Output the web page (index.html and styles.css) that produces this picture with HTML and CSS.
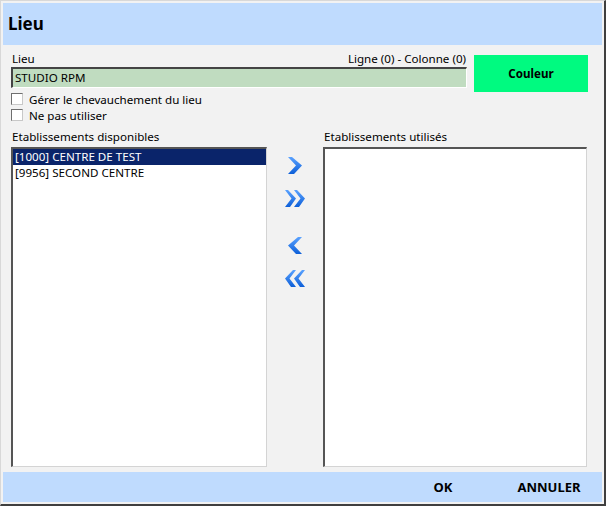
FILE: index.html
```html
<!DOCTYPE html>
<html>
<head>
    <title>Lieu</title>
    <link rel="stylesheet" href="styles.css">
</head>
<body>
<div class="window">
    <div class="header">Lieu</div>

    <div class="content">
        <div class="top">
            <div class="top-left">
                <div class="label-row">
                    <span>Lieu</span>
                    <span>Ligne (0) - Colonne (0)</span>
                </div>
                <div class="field">STUDIO RPM</div>
                <label class="check"><span class="box"></span>Gérer le chevauchement du lieu</label>
                <label class="check"><span class="box"></span>Ne pas utiliser</label>
            </div>
            <div class="color-btn">Couleur</div>
        </div>

        <div class="lists">
            <div class="list-label">Etablissements disponibles</div>
            <div></div>
            <div class="list-label">Etablissements utilisés</div>

            <div class="listbox">
                <div class="item selected">[1000] CENTRE DE TEST</div>
                <div class="item">[9956] SECOND CENTRE</div>
            </div>

            <div class="arrows">
                <svg class="arrow a1" width="16" height="19" viewBox="0 0 16 19">
                    <defs><linearGradient id="g" x1="0" y1="0" x2="0" y2="1"><stop offset="0" stop-color="#5aa2ff"/><stop offset="1" stop-color="#0d5fd8"/></linearGradient></defs>
                    <path d="M1 1 H5 L15 9.5 L7 18 H1 L9 9.5 Z" fill="url(#g)"/>
                </svg>
                <svg class="arrow a2" width="22" height="19" viewBox="0 0 22 19">
                    <path d="M1 1 H4 L12 9.5 L6 18 H1 L7.5 9.5 Z" fill="url(#g)"/>
                    <path d="M10 1 H13 L21 9.5 L15 18 H10 L16.5 9.5 Z" fill="url(#g)"/>
                </svg>
                <svg class="arrow a3" width="16" height="19" viewBox="0 0 16 19">
                    <path d="M15 1 H11 L1 9.5 L9 18 H15 L7 9.5 Z" fill="url(#g)"/>
                </svg>
                <svg class="arrow a4" width="22" height="19" viewBox="0 0 22 19">
                    <path d="M21 1 H18 L10 9.5 L16 18 H21 L14.5 9.5 Z" fill="url(#g)"/>
                    <path d="M12 1 H9 L1 9.5 L7 18 H12 L5.5 9.5 Z" fill="url(#g)"/>
                </svg>
            </div>

            <div class="listbox"></div>
        </div>
    </div>

    <div class="footer">
        <span class="fbtn">OK</span>
        <span class="fbtn">ANNULER</span>
    </div>
</div>
</body>
</html>
```

FILE: styles.css
```css
body {
    margin: 0;
    font-family: "Noto Sans", "DejaVu Sans", sans-serif;
    font-size: 11.6px;
    color: #000;
}
.window {
    width: 606px;
    height: 506px;
    box-sizing: border-box;
    background-color: #f2f2f2;
    border-top: 1px solid #d8d8d8;
    border-left: 1px solid #d8d8d8;
    border-right: 2px solid #3f3f3f;
    border-bottom: 2px solid #3f3f3f;
    padding: 2px;
    display: flex;
    flex-direction: column;
}
.header {
    height: 42px;
    background-color: #bfdbfe;
    font-size: 17px;
    font-weight: bold;
    line-height: 42px;
    padding-left: 5px;
}
.content {
    flex: 1;
    padding: 5px 0 0 8px;
}
.top {
    display: flex;
}
.top-left {
    width: 456px;
}
.label-row {
    display: flex;
    justify-content: space-between;
    height: 17px;
    line-height: 17px;
    padding: 0 1px;
}
.field {
    height: 21px;
    box-sizing: border-box;
    background-color: #c0dcc0;
    border-top: 2px solid #444;
    border-left: 2px solid #444;
    border-right: 1px solid #fff;
    border-bottom: 1px solid #fff;
    padding-left: 2px;
    line-height: 18px;
}
.check {
    display: flex;
    align-items: center;
    height: 16px;
}
.check:first-of-type {
    margin-top: 3px;
}
.box {
    width: 12px;
    height: 12px;
    box-sizing: border-box;
    background-color: #fff;
    border: 1px solid #6e6e6e;
    border-right-color: #c8c8c8;
    border-bottom-color: #c8c8c8;
    margin-right: 6px;
}
.color-btn {
    margin: 5px 0 0 7px;
    width: 114px;
    height: 37px;
    background-color: #00fa80;
    display: flex;
    align-items: center;
    justify-content: center;
    font-weight: bold;
}
.lists {
    margin-top: 4px;
    display: grid;
    grid-template-columns: 256px 56px 264px;
    grid-template-rows: 18px 320px;
    row-gap: 2px;
}
.list-label {
    padding: 2px 0 0 1px;
    line-height: 16px;
}
.listbox {
    background-color: #fff;
    border: 2px solid;
    border-color: #555 #d4d4d4 #d4d4d4 #555;
    border-right-width: 1px;
    border-bottom-width: 1px;
}
.item {
    height: 16px;
    line-height: 16px;
    padding-left: 2px;
}
.item.selected {
    background-color: #0a246a;
    color: #fff;
}
.arrows {
    display: flex;
    flex-direction: column;
    align-items: center;
    padding-top: 9px;
}
.a2 { margin-top: 14px; }
.a3 { margin-top: 28px; }
.a4 { margin-top: 14px; }
.footer {
    height: 30px;
    background-color: #bfdbfe;
    display: flex;
    justify-content: flex-end;
    align-items: center;
    padding-right: 3px;
    gap: 6px;
    font-size: 13px;
    font-weight: bold;
}
.fbtn {
    width: 100px;
    text-align: center;
}
```
